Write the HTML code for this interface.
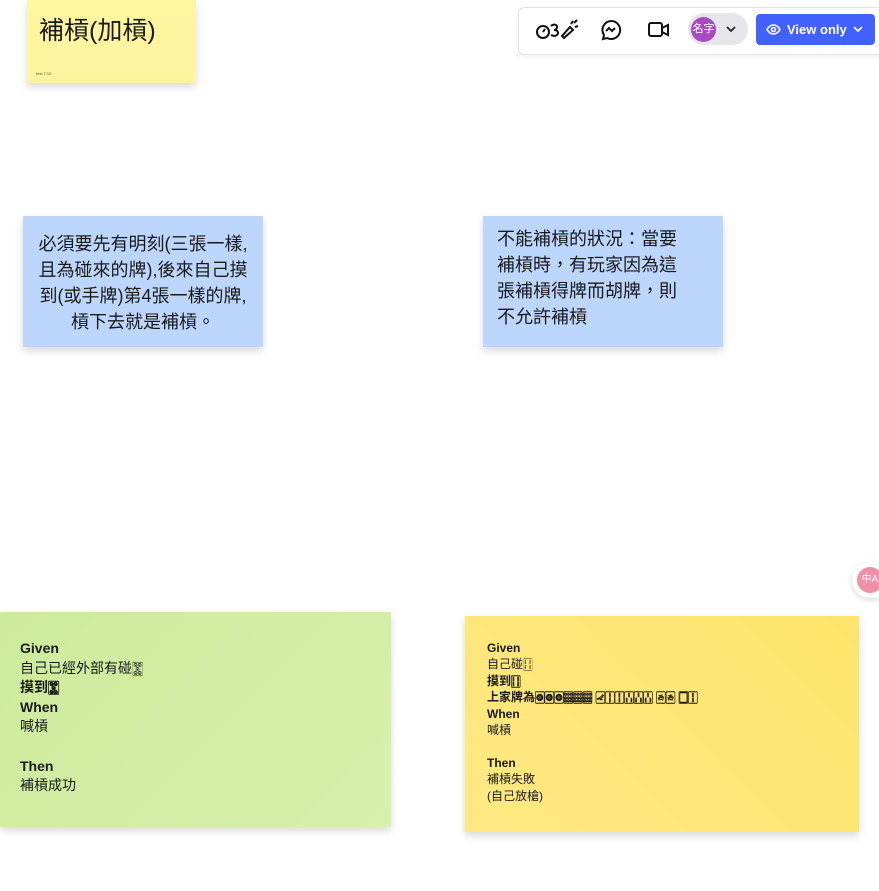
<!DOCTYPE html><html><head><meta charset="utf-8"><style>
body{margin:0;width:879px;height:891px;background:#fff;position:relative;overflow:hidden;font-family:"Liberation Sans","Noto Sans CJK TC",sans-serif;color:#1a1a1a}
.n{position:absolute;box-shadow:0 4px 8px rgba(0,0,0,.15)}
.b{background:#bcd6fd}
.cj{font-size:18px;line-height:26px}
.g b{font-weight:bold}
</style></head><body>
<div class="n" style="left:27px;top:0;width:169px;height:83px;background:linear-gradient(#fff6a0,#fff3a0)">
<div style="position:absolute;left:12px;top:15px;font-size:25px;line-height:32px">補槓(加槓)</div>
<div style="position:absolute;left:9px;top:71px;font-size:4px;color:#555">test 7/10</div></div>
<div class="n b cj" style="left:23px;top:216px;width:240px;height:131px;text-align:center;box-sizing:border-box;padding:15px 8px 0">必須要先有明刻(三張一樣,且為碰來的牌),後來自己摸到(或手牌)第4張一樣的牌,槓下去就是補槓。</div>
<div class="n b cj" style="left:483px;top:216px;width:240px;height:131px;box-sizing:border-box;padding:10px 30px 0 14px">不能補槓的狀況：當要補槓時，有玩家因為這張補槓得牌而胡牌，則不允許補槓</div>
<div class="n" style="left:0;top:612px;width:391px;height:215px;background:linear-gradient(135deg,#cdeb9c,#d7f0ac);box-sizing:border-box;padding:27px 20px;font-size:14px;line-height:19.6px">
<b>Given</b><br>自己已經外部有碰🀝<br><b>摸到🀝</b><br><b>When</b><br>喊槓<br><br><b>Then</b><br>補槓成功</div>
<div class="n" style="left:465px;top:616px;width:394px;height:216px;background:linear-gradient(225deg,#fde56c,#fee883);box-sizing:border-box;padding:24px 22px;font-size:12px;line-height:16.4px">
<b>Given</b><br>自己碰🀓<br><b>摸到🀓</b><br><b>上家牌為🀙🀙🀙🀡🀡🀡 🀐🀑🀑🀒🀒🀒 🀂🀂 🀆🀑</b><br><b>When</b><br>喊槓<br><br><b>Then</b><br>補槓失敗<br>(自己放槍)</div>
<div style="position:absolute;left:518px;top:7px;width:370px;height:46px;background:#fff;border:1px solid #e3e3e8;border-radius:6px;box-shadow:0 2px 6px rgba(0,0,0,.06)"></div>
<svg style="position:absolute;left:535px;top:18px" width="46" height="24" viewBox="0 0 46 24" fill="none" stroke="#111" stroke-width="2"><circle cx="8" cy="14" r="6"/><path d="M8 14l2-3"/><path d="M16 8c2-2 6-2 6 1s-3 3-3 3c2 0 4 1 4 3s-3 4-7 2"/><path d="M27 18l8-9 3 3-9 8z M36 6l2-3 M40 9l3-1 M39 5l3-3"/></svg>
<svg style="position:absolute;left:600px;top:19px" width="22" height="22" viewBox="0 0 22 22" fill="none" stroke="#111" stroke-width="2"><path d="M11 2a9 9 0 1 1-4 17l-4 1 1-4A9 9 0 0 1 11 2z"/><path d="M6 12l3-3 3 3 3-3"/></svg>
<svg style="position:absolute;left:648px;top:20px" width="22" height="20" viewBox="0 0 22 20" fill="none" stroke="#111" stroke-width="2"><rect x="1" y="3" width="13" height="13" rx="2"/><path d="M14 8l6-3v10l-6-3"/></svg>
<div style="position:absolute;left:688px;top:13px;width:60px;height:32px;border-radius:16px;background:#e6e6ea"></div>
<div style="position:absolute;left:691px;top:17px;width:25px;height:25px;border-radius:50%;background:#a94ac0;color:#fff;font-size:11px;line-height:25px;text-align:center">名字</div>
<svg style="position:absolute;left:725px;top:25px" width="12" height="8" viewBox="0 0 12 8" fill="none" stroke="#222" stroke-width="1.8"><path d="M2 2l4 4 4-4"/></svg>
<div style="position:absolute;left:756px;top:14px;width:119px;height:31px;border-radius:4px;background:#4262ff;color:#fff;font-size:13px;font-weight:bold;line-height:31px">
<svg style="position:absolute;left:10px;top:10px" width="15" height="11" viewBox="0 0 15 11" fill="none" stroke="#fff" stroke-width="1.6"><path d="M1 5.5C3 2 5 1 7.5 1S12 2 14 5.5C12 9 10 10 7.5 10S3 9 1 5.5z"/><circle cx="7.5" cy="5.5" r="2"/></svg>
<span style="position:absolute;left:31px">View only</span>
<svg style="position:absolute;left:97px;top:12px" width="10" height="7" viewBox="0 0 10 7" fill="none" stroke="#fff" stroke-width="1.6"><path d="M1 1l4 4 4-4"/></svg></div>
<div style="position:absolute;left:852px;top:562px;width:40px;height:36px;border-radius:18px;background:#fff;box-shadow:0 2px 6px rgba(0,0,0,.15)"></div>
<div style="position:absolute;left:857px;top:567px;width:26px;height:26px;border-radius:50%;background:#f08fa8;color:#fff;font-size:10px;line-height:26px;text-align:center">中A</div>
</body></html>
